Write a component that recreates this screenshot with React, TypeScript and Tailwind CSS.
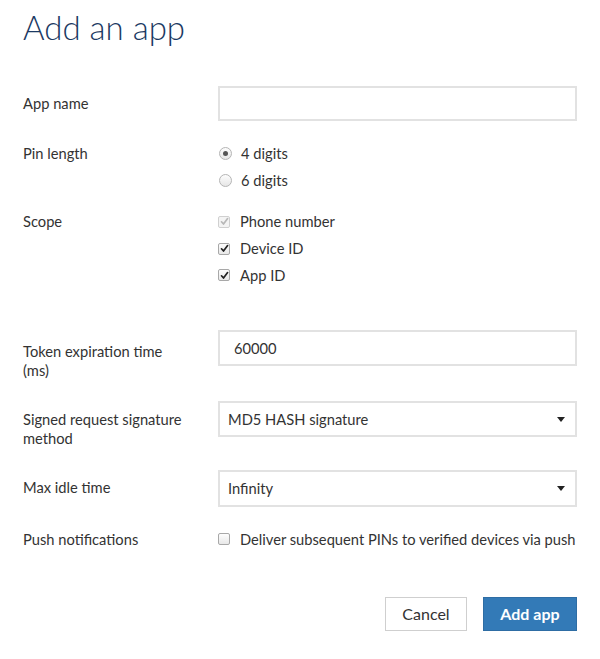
import React from "react";

const font = { fontFamily: "Lato, 'Open Sans', sans-serif" };

function Radio({ checked }: { checked?: boolean }) {
  return (
    <span className="relative flex h-[13px] w-[13px] items-center justify-center rounded-full border border-[#b5b5b5] bg-gradient-to-b from-[#fdfdfd] to-[#e6e6e6]">
      {checked && <span className="h-[5px] w-[5px] rounded-full bg-[#555]" />}
    </span>
  );
}

function Check({ checked, disabled }: { checked?: boolean; disabled?: boolean }) {
  return (
    <span
      className={
        disabled
          ? "flex h-[12px] w-[12px] items-center justify-center rounded-[2px] border border-[#d0d0d0] bg-[#f4f4f4]"
          : "flex h-[12px] w-[12px] items-center justify-center rounded-[2px] border border-[#a8a8a8] bg-gradient-to-b from-[#fdfdfd] to-[#e8e8e8]"
      }
    >
      {checked && (
        <svg width="9" height="9" viewBox="0 0 9 9">
          <path
            d="M1.5 4.8 L3.5 7 L7.6 1.6"
            fill="none"
            stroke={disabled ? "#b8b8b8" : "#222"}
            strokeWidth="1.7"
            strokeLinecap="round"
            strokeLinejoin="round"
          />
        </svg>
      )}
    </span>
  );
}

function Caret() {
  return (
    <svg width="8" height="5" viewBox="0 0 8 5" className="shrink-0">
      <path d="M0 0 H8 L4 5 Z" fill="#222" />
    </svg>
  );
}

export default function App() {
  return (
    <div className="h-[659px] w-[600px] bg-white text-[14.7px] text-[#333]" style={font}>
      <div className="pl-[23px] pr-[23px]">
        <h1 className="pt-[7px] text-[33px] font-light leading-[40px] text-[#1c3a63]">Add an app</h1>

        {/* App name */}
        <div className="mt-[39px] grid grid-cols-[195px_1fr] items-center">
          <div>App name</div>
          <input className="h-[35px] w-full border-2 border-[#e2e2e2] px-[10px] outline-none" />
        </div>

        {/* Pin length */}
        <div className="mt-[19px] grid grid-cols-[195px_1fr]">
          <div className="flex h-[27px] items-center">Pin length</div>
          <div className="flex flex-col">
            <label className="flex h-[27px] items-center gap-[9px] pl-[1px]">
              <Radio checked />
              <span>4 digits</span>
            </label>
            <label className="flex h-[27px] items-center gap-[9px] pl-[1px]">
              <Radio />
              <span>6 digits</span>
            </label>
          </div>
        </div>

        {/* Scope */}
        <div className="mt-[14px] grid grid-cols-[195px_1fr]">
          <div className="flex h-[27px] items-center">Scope</div>
          <div className="flex flex-col">
            <label className="flex h-[27px] items-center gap-[10px]">
              <Check checked disabled />
              <span>Phone number</span>
            </label>
            <label className="flex h-[27px] items-center gap-[10px]">
              <Check checked />
              <span>Device ID</span>
            </label>
            <label className="flex h-[26px] items-center gap-[10px]">
              <Check checked />
              <span>App ID</span>
            </label>
          </div>
        </div>

        {/* Token */}
        <div className="mt-[42px] grid grid-cols-[195px_1fr] items-start">
          <div className="h-[36px] pt-[12px] leading-[19px]">
            Token expiration time
            <br />
            (ms)
          </div>
          <div className="flex h-[36px] items-center border-2 border-[#e2e2e2] pl-[14px]">60000</div>
        </div>

        {/* Signed */}
        <div className="mt-[35px] grid grid-cols-[195px_1fr] items-start">
          <div className="h-[36px] pt-[9px] leading-[19px]">
            Signed request signature
            <br />
            method
          </div>
          <div className="flex h-[36px] items-center justify-between border-2 border-[#e2e2e2] pl-[8px] pr-[10px]">
            <span>MD5 HASH signature</span>
            <Caret />
          </div>
        </div>

        {/* Max idle */}
        <div className="mt-[33px] grid grid-cols-[195px_1fr] items-start">
          <div className="pt-[8px] leading-[19px]">Max idle time</div>
          <div className="flex h-[37px] items-center justify-between border-2 border-[#e2e2e2] pl-[8px] pr-[10px]">
            <span>Infinity</span>
            <Caret />
          </div>
        </div>

        {/* Push */}
        <div className="mt-[19px] grid grid-cols-[195px_1fr]">
          <div className="flex h-[26px] items-center">Push notifications</div>
          <label className="flex h-[26px] items-center gap-[10px]">
            <Check />
            <span>Deliver subsequent PINs to verified devices via push</span>
          </label>
        </div>

        {/* Buttons */}
        <div className="mt-[45px] flex justify-end gap-[16px]">
          <button className="h-[34px] w-[82px] border border-[#cfcfcf] bg-white text-[16px] text-[#333]">Cancel</button>
          <button className="h-[34px] w-[94px] border border-[#2e6da4] bg-[#337ab7] text-[16px] font-bold text-white">
            Add app
          </button>
        </div>
      </div>
    </div>
  );
}
